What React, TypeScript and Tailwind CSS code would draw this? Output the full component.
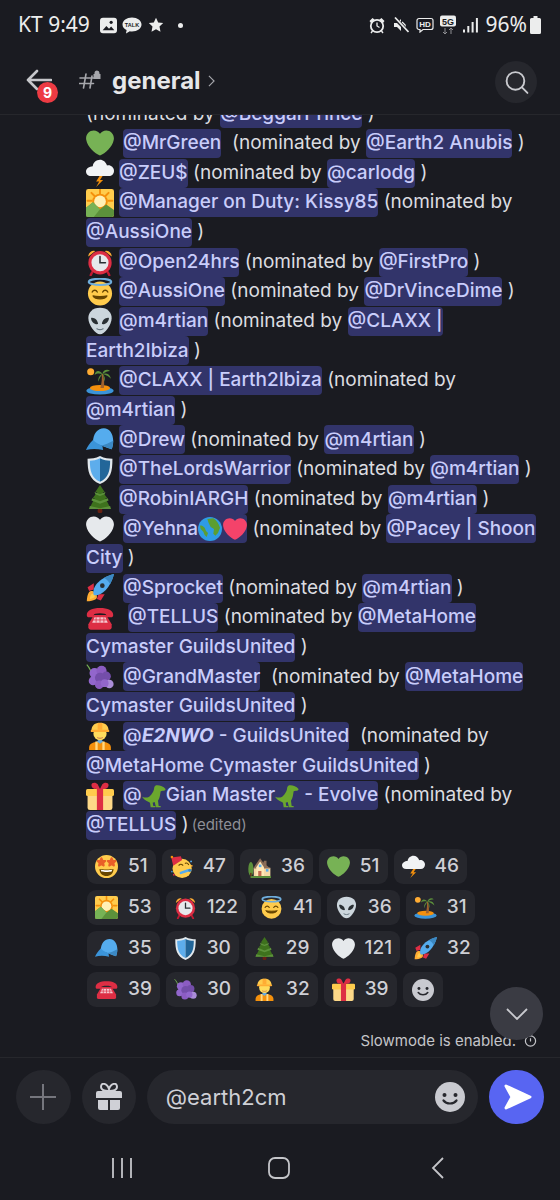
import { ReactNode } from "react";

const HEART =
  "M35.885 11.833c0-5.45-4.418-9.868-9.867-9.868-3.308 0-6.227 1.633-8.018 4.129-1.791-2.496-4.71-4.129-8.017-4.129-5.45 0-9.868 4.417-9.868 9.868 0 .772.098 1.52.266 2.241C1.751 22.587 11.216 31.568 18 34.034c6.783-2.466 16.249-11.447 17.617-19.959.17-.721.268-1.469.268-2.242z";

const star = (cx: number, cy: number) =>
  `M${cx} ${cy - 6}l1.8 3.9 4.2.5-3.1 2.9.8 4.2-3.7-2.1-3.7 2.1.8-4.2-3.1-2.9 4.2-.5z`;

const emojis: Record<string, ReactNode> = {
  green: <path d={HEART} fill="#77B255" />,
  white: <path d={HEART} fill="#E6E9EC" />,
  red: <path d={HEART} fill="#F4436A" />,
  storm: (
    <>
      <path d="M18 21l-5 8h4l-4 7 9-9h-4l4-6z" fill="#F4900C" />
      <path d="M29 8c-.7 0-1.400.100-2 .300C25.700 4 22 1 18 1c-4.800 0-8.700 3.600-9.300 8.200C4.400 9.400 0 12 0 16c0 3 2.500 6 6.500 6h23c3.600 0 6.500-3 6.500-7 0-3.800-3.700-7-7-7z" fill="#F1F3F5" />
    </>
  ),
  sunrise: (
    <>
      <rect x="0" y="0" width="36" height="36" rx="3" fill="#FFCC4D" />
      <path d="M18 1v5M7 5l4 4M29 5l-4 4M2 15h5M29 15h5" stroke="#F4900C" strokeWidth="2.500" strokeLinecap="round" />
      <circle cx="18" cy="16" r="10" fill="#F4900C" />
      <circle cx="18" cy="16" r="7.500" fill="#FFF0B5" />
      <path d="M0 33V24l9-7 9 9 8-6 10 7v6a3 3 0 0 1-3 3H3a3 3 0 0 1-3-3z" fill="#5C913B" />
      <path d="M9 17l9 9-8 10H3a3 3 0 0 1-3-3V24z" fill="#77B255" />
    </>
  ),
  clock: (
    <>
      <path d="M3 11a7 7 0 0 1 9-7zM33 11a7 7 0 0 0-9-7z" fill="#FFAC33" />
      <path d="M8 31l-2 4M28 31l2 4" stroke="#BE1931" strokeWidth="3" strokeLinecap="round" />
      <circle cx="18" cy="19" r="15" fill="#DD2E44" />
      <circle cx="18" cy="19" r="11" fill="#E6E9EC" />
      <path d="M18 11v8h7" fill="none" stroke="#292F33" strokeWidth="2" strokeLinecap="round" />
    </>
  ),
  halo: (
    <>
      <circle cx="18" cy="20" r="15.500" fill="#FFCB4C" />
      <ellipse cx="18" cy="5" rx="14.500" ry="4" fill="none" stroke="#6FAEDD" strokeWidth="2.600" />
      <path d="M8 18c1.500-3 5-3 6.500 0M21.500 18c1.500-3 5-3 6.500 0" fill="none" stroke="#664500" strokeWidth="1.800" strokeLinecap="round" />
      <path d="M9 23c3 5 15 5 18 0-4 1-14 1-18 0z" fill="#664500" stroke="#664500" strokeWidth="1.500" strokeLinejoin="round" />
    </>
  ),
  alien: (
    <>
      <path d="M18 1C8 1 3 7.500 3 14c0 9 9 21 15 21s15-12 15-21C33 7.500 28 1 18 1z" fill="#CCD6DD" />
      <path d="M6.500 14c4-1 9 3 9 8-4 1-9-3-9-8zM29.500 14c-4-1-9 3-9 8 4 1 9-3 9-8z" fill="#292F33" />
      <path d="M14 28c2.500 1.500 5.500 1.500 8 0" fill="none" stroke="#66757F" strokeWidth="1.500" strokeLinecap="round" />
    </>
  ),
  island: (
    <>
      <circle cx="6" cy="6" r="4.500" fill="#FFAC33" />
      <ellipse cx="18" cy="30.500" rx="17.500" ry="5" fill="#3B94D9" />
      <ellipse cx="18" cy="27" rx="13" ry="4" fill="#F4900C" />
      <path d="M20 9c1 6 0 12-1.500 18H23c1-6 0-13-1-18z" fill="#A0622D" />
      <path d="M21 9C17 3 12 5 11 10c3-2 6-2 10-1zM21 9c1-5 6-7 10-4-3 0-6 1-10 4zM21 9c5-2 10 0 11 6-3-3-6-5-11-6zM21 9c-3 1-6 5-5 10 1-4 3-7 5-10zM21 9c3 2 4 6 3 10-1-4-1-7-3-10z" fill="#5C913B" />
    </>
  ),
  cap: (
    <>
      <path d="M9 21C9 10 15 3 23 3c7 0 12 7 12 16 0 5-1 9-2 11-6-2-15-5-24-9z" fill="#55ACEE" />
      <path d="M20 25l13 5c1-3 2-7 2-11-5 3-11 5-15 6z" fill="#3B88C3" />
      <path d="M9 18C5 22 2 26 0 31c7-2 14-2 22 0l-1-6c-4-1-8-3-12-7z" fill="#3B94D9" />
    </>
  ),
  shield: (
    <>
      <path d="M18 0C12 3 7 3.500 2 3.500 2 20 4 30 18 36 32 30 34 20 34 3.500 29 3.500 24 3 18 0z" fill="#E1E8ED" />
      <path d="M18 3C13 5.500 9 6 5 6c0 13 2 22 13 27z" fill="#5DADEC" />
      <path d="M18 3c5 2.500 9 3 13 3 0 13-2 22-13 27z" fill="#226699" />
    </>
  ),
  tree: (
    <>
      <rect x="15" y="30" width="6" height="6" rx="2" fill="#662113" />
      <path d="M18 0l6 9h-2.500l6 8H25l7 14H4l7-14H8.500l6-8H12z" fill="#3E721D" />
      <path d="M11 9l7 3 7-3-1 3-6 2-6-2zM8 17l10 4 10-4 1 3-11 4-11-4zM5 27l13 3 13-3 1 4H4z" fill="#5C913B" />
    </>
  ),
  earth: (
    <>
      <circle cx="18" cy="18" r="18" fill="#2E9BE6" />
      <path d="M14 3l9-1c5 3 8 8 10 14l-3 8-4 4-3-3 1-7-5-3-3-6zM3 13c3-1 5 1 7 3l2 5 3 3-2 6-3-3-2-5-4-4z" fill="#5C9E31" />
    </>
  ),
  rocket: (
    <>
      <path d="M4 23c-2 3-3 8-3 12 4 0 9-1 12-3 2-2 1-6-1-8s-6-3-8-1z" fill="#FFAC33" />
      <path d="M7 26c-1 1-2 4-2 6 2 0 5-1 6-2 1-2 0-3-1-4s-2-1-3 0z" fill="#FFCC4D" />
      <path d="M10 12L2 17l2 5 6-2zM24 26l-5 8-5-2 2-6z" fill="#DD2E44" />
      <path d="M10 27C7 18 16 5 36 0c-5 20-18 29-26 27z" fill="#55ACEE" />
      <path d="M36 0c-5 1-9 3-13 5 3 1 6 4 8 8 2-4 4-8 5-13z" fill="#3B88C3" />
      <circle cx="21" cy="15" r="3" fill="#292F33" />
    </>
  ),
  phone: (
    <>
      <path d="M1 14c0-6 7-9 17-9s17 3 17 9c0 2-1 3-3 3h-4c-2 0-2-1-2-3 0-1-3-2-8-2s-8 1-8 2c0 2 0 3-2 3H4c-2 0-3-1-3-3z" fill="#DD2E44" />
      <path d="M10 14h16l7 12v4a3 3 0 0 1-3 3H6a3 3 0 0 1-3-3v-4z" fill="#DD2E44" />
      <path d="M11 17h14l3 7H8z" fill="#F5C6CE" />
      <path d="M13 17v7M18 17v7M23 17v7M9 20.500h18" stroke="#DD2E44" strokeWidth="1" />
    </>
  ),
  grapes: (
    <>
      <path d="M7 12C5 8 4 5 1 2" fill="none" stroke="#77B255" strokeWidth="1.500" />
      <circle cx="11" cy="13" r="6.500" fill="#9266CC" />
      <circle cx="20" cy="10" r="6.500" fill="#8B5CC2" />
      <circle cx="26" cy="17" r="6" fill="#744EAA" />
      <circle cx="9" cy="23" r="5.500" fill="#9266CC" />
      <circle cx="18" cy="19" r="6.500" fill="#744EAA" />
      <circle cx="17" cy="28" r="5.500" fill="#8B5CC2" />
      <circle cx="30" cy="27" r="5.500" fill="#AA8DD8" />
      <circle cx="24" cy="26" r="5" fill="#9266CC" />
    </>
  ),
  worker: (
    <>
      <path d="M4 36v-3c0-5 5-8 14-8s14 3 14 8v3z" fill="#F4900C" />
      <path d="M12 25h3v11h-3zM21 25h3v11h-3z" fill="#FFD983" />
      <path d="M14 25l4 3 4-3-4-4z" fill="#66AADD" />
      <circle cx="18" cy="15" r="8.500" fill="#FFDC5D" />
      <path d="M7 11C7 4 12 1 18 1s11 3 11 10z" fill="#FFCC4D" />
      <rect x="6" y="10" width="24" height="3" rx="1.500" fill="#FFAC33" />
      <path d="M15 1.300h6V10h-6z" fill="#FFAC33" />
      <path d="M14.500 20c2 1.200 5 1.200 7 0" stroke="#C1694F" strokeWidth="1.200" fill="none" />
    </>
  ),
  gift: (
    <>
      <rect x="2" y="15" width="32" height="21" rx="3" fill="#FDD888" />
      <rect x="0" y="9" width="36" height="9" rx="2" fill="#FFCC4D" />
      <rect x="14" y="9" width="8" height="27" fill="#DD2E44" />
      <path d="M18 9C13 10 7 9 7 4c0-4 6-4 8-1zM18 9c5 1 11 0 11-5 0-4-6-4-8-1z" fill="#DD2E44" />
    </>
  ),
  rex: (
    <path
      d="M21 2c4-1 11 1 14 5 1 2-1 3-4 3l-3 1c-1 5-1 10-4 14l1 8h3v2h-7l-2-8-3 1 1 5h3v2h-7l-1-7C9 26 4 25 0 19c5 2 9 2 12-1 3-3 5-6 6-10 0-3 1-5 3-6z"
      fill="#6BA72E"
    />
  ),
  starstruck: (
    <>
      <circle cx="18" cy="18" r="18" fill="#FFCC4D" />
      <path d="M7 22c0 7 5 11 11 11s11-4 11-11c-4 1-18 1-22 0z" fill="#664500" />
      <path d="M9 23c4 1 14 1 18 0l-1 3c-4 1-12 1-16 0z" fill="#fff" />
      <path d={star(10, 11)} fill="#E95F28" stroke="#E95F28" strokeWidth="3" strokeLinejoin="round" />
      <path d={star(26, 11)} fill="#E95F28" stroke="#E95F28" strokeWidth="3" strokeLinejoin="round" />
    </>
  ),
  party: (
    <>
      <circle cx="19" cy="21" r="15" fill="#FFCC4D" />
      <path d="M2 4l15-2 2 6-14 9z" fill="#DD2E44" />
      <circle cx="3" cy="3" r="2" fill="#F4900C" />
      <path d="M14 16c2-2 4-2 6 0M24 13c2-1 4 0 5 2" fill="none" stroke="#664500" strokeWidth="1.800" strokeLinecap="round" />
      <path d="M17 28l12-4" stroke="#55ACEE" strokeWidth="4" strokeLinecap="round" />
      <circle cx="31" cy="24" r="2.500" fill="#3B88C3" />
      <circle cx="3" cy="26" r="1.500" fill="#3B88C3" />
      <circle cx="6" cy="31" r="1.500" fill="#DD2E44" />
      <circle cx="33" cy="10" r="1.500" fill="#55ACEE" />
      <circle cx="34" cy="17" r="1.500" fill="#FFAC33" />
    </>
  ),
  house: (
    <>
      <ellipse cx="4.500" cy="22" rx="4" ry="11" fill="#5C913B" />
      <rect x="3.500" y="28" width="2" height="6" fill="#662113" />
      <path d="M9 20h26v13H9z" fill="#F5D8A6" />
      <path d="M8 21L19 5l5 7 1-3h4v7l6 5z" fill="#8A6D58" />
      <path d="M13 19l6-9 6 9v14H13z" fill="#FFE8B6" />
      <rect x="17" y="15" width="4" height="4" fill="#55ACEE" />
      <rect x="28" y="22" width="4" height="4" fill="#55ACEE" />
      <rect x="16" y="25" width="5" height="8" fill="#C1694F" />
      <rect x="4" y="33" width="32" height="3" fill="#5C913B" />
    </>
  ),
};

function Emoji({ name, size = 28, className = "" }: { name: string; size?: number; className?: string }) {
  return (
    <svg viewBox="0 0 36 36" width={size} height={size} className={`shrink-0 ${className}`}>
      {emojis[name]}
    </svg>
  );
}

function M({ children, className = "" }: { children: ReactNode; className?: string }) {
  return (
    <span className={`inline-flex h-[29px] items-center whitespace-pre rounded-[4px] bg-[#32346a] font-medium text-[#c9cdfb] ${className}`}>
      {children}
    </span>
  );
}

function Line({ children }: { children: ReactNode }) {
  return <div className="flex h-[29.65px] items-center whitespace-pre">{children}</div>;
}

function Nominee({ emoji, gap = "ml-[5px]", name, by, spacer = " " }: { emoji: string; gap?: string; name: ReactNode; by?: ReactNode; spacer?: string }) {
  return (
    <Line>
      <Emoji name={emoji} />
      <M className={gap}>{name}</M>
      <span>{spacer}(nominated by </span>
      {by}
    </Line>
  );
}

const reactions = [
  [["starstruck", 51], ["party", 47], ["house", 36], ["green", 51], ["storm", 46]],
  [["sunrise", 53], ["clock", 122], ["halo", 41], ["alien", 36], ["island", 31]],
  [["cap", 35], ["shield", 30], ["tree", 29], ["white", 121], ["rocket", 32]],
  [["phone", 39], ["grapes", 30], ["worker", 32], ["gift", 39]],
] as [string, number][][];

function Smiley({ size, bg }: { size: number; bg: string }) {
  return (
    <svg viewBox="0 0 30 30" width={size} height={size}>
      <circle cx="15" cy="15" r="15" fill="#c9cad0" />
      <circle cx="9.500" cy="13" r="2" fill={bg} />
      <circle cx="20.500" cy="13" r="2" fill={bg} />
      <path d="M8.500 18.500c3 4 10 4 13 0" fill="none" stroke={bg} strokeWidth="2.200" strokeLinecap="round" />
    </svg>
  );
}

function StatusBar() {
  return (
    <div className="flex h-[50px] items-center pl-[18px] pr-[19px] text-[21px] text-[#eceded] [font-family:'Noto_Sans',sans-serif]">
      <span>KT 9:49</span>
      <svg viewBox="0 0 16 16" width="17" height="17" className="ml-[10px]">
        <rect x="0.800" y="1.500" width="14.400" height="13" rx="2" fill="none" stroke="#eceded" strokeWidth="1.600" />
        <rect x="0.800" y="1.500" width="14.400" height="13" rx="2" fill="#eceded" />
        <path d="M2.500 12.500l3.500-4 2.500 2.500 2-2 3 3.500z" fill="#1a1b21" />
        <circle cx="10.500" cy="5" r="1.500" fill="#1a1b21" />
      </svg>
      <svg viewBox="0 0 20 17" width="20" height="17" className="ml-[5px]">
        <path d="M10 0.500c5.300 0 9.500 3.200 9.500 7s-4.200 7-9.500 7c-.8 0-1.500-.100-2.200-.200L4 16.500l.6-3.500C2 11.800.5 9.800.500 7.500c0-3.800 4.200-7 9.500-7z" fill="#eceded" />
        <text x="10" y="9.500" textAnchor="middle" fontSize="5.500" fontWeight="700" fill="#1a1b21" fontFamily="Liberation Sans, sans-serif">TALK</text>
      </svg>
      <svg viewBox="0 0 16 16" width="16" height="16" className="ml-[6px]">
        <path d="M8 0.800l2.200 4.700 5 .6-3.700 3.500 1 5.100L8 12.200l-4.500 2.500 1-5.100L.8 6.100l5-.6z" fill="#eceded" />
      </svg>
      <span className="ml-[14px] h-[5px] w-[5px] rounded-full bg-[#eceded]" />
      <div className="ml-auto flex items-center">
        <svg viewBox="0 0 16 17" width="16" height="17">
          <circle cx="8" cy="9" r="6.200" fill="none" stroke="#eceded" strokeWidth="1.800" />
          <path d="M8 5.500V9l2.500 1.500" fill="none" stroke="#eceded" strokeWidth="1.300" />
          <path d="M0.500 4l3-3 2 1.500-3.500 3.500zM15.500 4l-3-3-2 1.500 3.500 3.500z" fill="#eceded" />
          <path d="M3.500 14L2 16M12.500 14l1.500 2" stroke="#eceded" strokeWidth="1.400" />
        </svg>
        <svg viewBox="0 0 16 16" width="16" height="16" className="ml-[8px]">
          <path d="M1 6h3l4-4v12l-4-4H1z" fill="#eceded" />
          <path d="M9 5l3 3v3" fill="none" stroke="#eceded" strokeWidth="1.500" />
          <path d="M2 1.500l13 13" stroke="#1a1b21" strokeWidth="3.500" />
          <path d="M2 0.500l13.500 14.500" stroke="#eceded" strokeWidth="1.700" />
        </svg>
        <svg viewBox="0 0 18 16" width="18" height="16" className="ml-[7px]">
          <path d="M3 1.500h12a2 2 0 0 1 2 2v7a2 2 0 0 1-2 2H7l-3 2.500V12.500H3a2 2 0 0 1-2-2v-7a2 2 0 0 1 2-2z" fill="none" stroke="#eceded" strokeWidth="1.200" />
          <text x="9" y="10" textAnchor="middle" fontSize="8" fontWeight="700" fill="#eceded" fontFamily="Liberation Sans, sans-serif">HD</text>
        </svg>
        <svg viewBox="0 0 18 20" width="18" height="20" className="ml-[5px]">
          <rect x="1" y="0.500" width="16" height="11" rx="2" fill="#eceded" />
          <text x="9" y="9.500" textAnchor="middle" fontSize="9" fontWeight="700" fill="#1a1b21" fontFamily="Liberation Sans, sans-serif">5G</text>
          <path d="M6 13v6m-2-2l2 2 2-2M12 19v-6m-2 2l2-2 2 2" fill="none" stroke="#8f9094" strokeWidth="1" />
        </svg>
        <svg viewBox="0 0 15 16" width="15" height="16" className="ml-[6px]">
          <rect x="0" y="12.500" width="2" height="3" fill="#eceded" />
          <rect x="4.300" y="9" width="2" height="6.500" fill="#eceded" />
          <rect x="8.600" y="5" width="2" height="10.500" fill="#eceded" />
          <rect x="12.900" y="1" width="2" height="14.500" fill="#eceded" />
        </svg>
        <span className="ml-[8px]">96%</span>
        <svg viewBox="0 0 11 18" width="11" height="18" className="ml-[3px]">
          <path d="M3.500 0h4v2h2a1.500 1.500 0 0 1 1.500 1.500V16.500A1.500 1.500 0 0 1 9.500 18h-8A1.500 1.500 0 0 1 0 16.500V3.500A1.500 1.500 0 0 1 1.500 2h2z" fill="#eceded" />
        </svg>
      </div>
    </div>
  );
}

function Header() {
  return (
    <div className="relative flex h-[65px] items-center border-b border-[#26272c] pl-[26px] pr-[23px]">
      <svg viewBox="0 0 26 22" width="26" height="22" className="mb-[5px]">
        <path d="M11 2L2 11l9 9M2 11h23" fill="none" stroke="#c6c7cb" strokeWidth="2.600" strokeLinecap="round" strokeLinejoin="round" />
      </svg>
      <span className="absolute left-[37px] top-[32px] flex h-[21px] w-[21px] items-center justify-center rounded-full bg-[#ed3b43] text-[14px] font-bold text-white">
        9
      </span>
      <svg viewBox="0 0 22 22" width="22" height="22" className="ml-[27px] mt-[-6px]">
        <path d="M7 6L4.500 20M13 8l-2 12M1 10h15M0.500 15.500h14" fill="none" stroke="#a6a7ac" strokeWidth="1.600" strokeLinecap="round" />
        <path d="M15.500 5a2.500 2.500 0 0 1 5 0v1h1v5h-7V6h1z" fill="#a6a7ac" />
      </svg>
      <span className="ml-[11px] -mt-[3px] text-[24px] font-bold text-[#e6e7e9]">general</span>
      <svg viewBox="0 0 8 14" width="7" height="12" className="ml-[7px] -mt-[2px]">
        <path d="M1 1l6 6-6 6" fill="none" stroke="#a6a7ac" strokeWidth="1.300" />
      </svg>
      <span className="ml-auto flex h-[42px] w-[42px] items-center justify-center rounded-full bg-[#26272d]">
        <svg viewBox="0 0 24 24" width="25" height="25">
          <circle cx="11" cy="10.500" r="8.500" fill="none" stroke="#c9cacf" strokeWidth="1.800" />
          <path d="M17.500 17l5 5" stroke="#c9cacf" strokeWidth="1.800" strokeLinecap="round" />
        </svg>
      </span>
    </div>
  );
}

function Messages() {
  return (
    <div className="-mt-[16px] ml-[86px] text-[19px] text-[#dcdde0]">
      <Line>
        <span>(nominated by </span>
        <M>@BeggarPrince</M>
        <span> )</span>
      </Line>
      <Nominee emoji="green" gap="ml-[9px]" name="@MrGreen" spacer="  " by={<><M>@Earth2 Anubis</M><span> )</span></>} />
      <Nominee emoji="storm" name="@ZEU$" by={<><M>@carlodg</M><span> )</span></>} />
      <Line>
        <Emoji name="sunrise" />
        <M className="ml-[5px]">@Manager on Duty: Kissy85</M>
        <span> (nominated by</span>
      </Line>
      <Line><M>@AussiOne</M><span> )</span></Line>
      <Nominee emoji="clock" name="@Open24hrs" by={<><M>@FirstPro</M><span> )</span></>} />
      <Nominee emoji="halo" name="@AussiOne" by={<><M>@DrVinceDime</M><span> )</span></>} />
      <Nominee emoji="alien" name="@m4rtian" by={<M>@CLAXX |</M>} />
      <Line><M>Earth2Ibiza</M><span> )</span></Line>
      <Line>
        <Emoji name="island" />
        <M className="ml-[5px]">@CLAXX | Earth2Ibiza</M>
        <span> (nominated by</span>
      </Line>
      <Line><M>@m4rtian</M><span> )</span></Line>
      <Nominee emoji="cap" name="@Drew" by={<><M>@m4rtian</M><span> )</span></>} />
      <Nominee emoji="shield" name="@TheLordsWarrior" by={<><M>@m4rtian</M><span> )</span></>} />
      <Nominee emoji="tree" name="@RobinIARGH" by={<><M>@m4rtian</M><span> )</span></>} />
      <Nominee
        emoji="white"
        gap="ml-[9px]"
        name={<>@Yehna<Emoji name="earth" size={24} /><Emoji name="red" size={24} className="ml-[1px]" /></>}
        by={<M>@Pacey | Shoon</M>}
      />
      <Line><M>City</M><span> )</span></Line>
      <Nominee emoji="rocket" gap="ml-[9px]" name="@Sprocket" by={<><M>@m4rtian</M><span> )</span></>} />
      <Nominee emoji="phone" gap="ml-[14px]" name="@TELLUS" by={<M>@MetaHome</M>} />
      <Line><M>Cymaster GuildsUnited</M><span> )</span></Line>
      <Line>
        <Emoji name="grapes" />
        <M className="ml-[9px]">@GrandMaster</M>
        <span>  (nominated by </span>
        <M>@MetaHome</M>
      </Line>
      <Line><M>Cymaster GuildsUnited</M><span> )</span></Line>
      <Line>
        <Emoji name="worker" />
        <M className="ml-[9px]">@<em className="font-bold">E2NWO</em> - GuildsUnited</M>
        <span>  (nominated by</span>
      </Line>
      <Line><M>@MetaHome Cymaster GuildsUnited</M><span> )</span></Line>
      <Line>
        <Emoji name="gift" />
        <M className="ml-[9px]">@<Emoji name="rex" size={24} />Gian Master<Emoji name="rex" size={24} /> - Evolve</M>
        <span> (nominated by</span>
      </Line>
      <Line>
        <M>@TELLUS</M>
        <span> )</span>
        <span className="ml-[3px] text-[15px] text-[#8e8f96]">(edited)</span>
      </Line>
    </div>
  );
}

function Reactions() {
  return (
    <div className="ml-[87px] mt-[9px] flex flex-col gap-[6px]">
      {reactions.map((row, i) => (
        <div key={i} className="flex gap-[6px]">
          {row.map(([name, count]) => (
            <div key={name} className="flex h-[35px] items-center gap-[10px] rounded-[9px] bg-[#26272d] pl-[8px] pr-[8px]">
              <Emoji name={name} size={23} />
              <span className="text-[19px] font-medium text-[#cfd0d6]">{count}</span>
            </div>
          ))}
          {i === 3 && (
            <div className="flex h-[35px] w-[40px] items-center justify-center rounded-[9px] bg-[#26272d]">
              <Smiley size={22} bg="#26272d" />
            </div>
          )}
        </div>
      ))}
    </div>
  );
}

function Composer() {
  return (
    <div className="flex h-[88px] gap-[11px] border-t border-[#26272c] pl-[16px] pr-[16px] pt-[12px]">
      <span className="flex h-[54px] w-[55px] items-center justify-center rounded-full bg-[#26272d]">
        <svg viewBox="0 0 28 28" width="28" height="28">
          <path d="M14 1v26M1 14h26" stroke="#75767d" strokeWidth="2" />
        </svg>
      </span>
      <span className="flex h-[54px] w-[54px] items-center justify-center rounded-full bg-[#26272d]">
        <svg viewBox="0 0 28 28" width="28" height="28">
          <path d="M14 8c-3 0-8 0-8-4 0-5 6-4 8 2 2-6 8-7 8-2 0 4-5 4-8 4z" fill="none" stroke="#cfd0d6" strokeWidth="2" />
          <path d="M1 10a2 2 0 0 1 2-2h22a2 2 0 0 1 2 2v5H1zM3 17h10v10H5a2 2 0 0 1-2-2zM15 17h10v8a2 2 0 0 1-2 2h-8z" fill="#cfd0d6" />
        </svg>
      </span>
      <div className="flex h-[54px] w-[332px] items-center rounded-full bg-[#26272d] pl-[19px] pr-[13px]">
        <span className="text-[22px] text-[#cfd0d6]">@earth2cm</span>
        <span className="ml-auto">
          <Smiley size={30} bg="#26272d" />
        </span>
      </div>
      <span className="flex h-[54px] w-[55px] items-center justify-center rounded-full bg-[#5865f2]">
        <svg viewBox="0 0 30 28" width="30" height="28" className="ml-[2px]">
          <path d="M3 3l24 11L3 25l6-11z" fill="#fff" stroke="#fff" strokeWidth="3" strokeLinejoin="round" />
        </svg>
      </span>
    </div>
  );
}

function NavBar() {
  return (
    <div className="flex h-[55px] items-start pt-[12px]">
      <svg viewBox="0 0 22 22" width="22" height="22" className="ml-[111px]">
        <path d="M2 1v20M11 1v20M20 1v20" stroke="#c4c5c9" strokeWidth="1.800" />
      </svg>
      <svg viewBox="0 0 22 22" width="22" height="22" className="ml-[135px]">
        <rect x="1" y="1" width="20" height="20" rx="6" fill="none" stroke="#c4c5c9" strokeWidth="1.800" />
      </svg>
      <svg viewBox="0 0 14 22" width="14" height="22" className="ml-[141px]">
        <path d="M12 1L2 11l10 10" fill="none" stroke="#c4c5c9" strokeWidth="1.800" />
      </svg>
    </div>
  );
}

export default function App() {
  return (
    <div className="flex h-[1200px] w-[560px] flex-col overflow-hidden bg-[#1a1b21] [font-family:Inter,sans-serif]">
      <StatusBar />
      <Header />
      <div className="relative min-h-0 flex-1 overflow-hidden">
        <Messages />
        <Reactions />
        <div className="absolute bottom-[5px] right-[23px] flex items-center gap-[8px] text-[15px] text-[#c4c5c9]">
          <span>Slowmode is enabled.</span>
          <svg viewBox="0 0 14 14" width="13" height="13">
            <circle cx="7" cy="7.500" r="5.500" fill="none" stroke="#c4c5c9" strokeWidth="1.300" />
            <path d="M7 4.500V8M5 0.800h4" stroke="#c4c5c9" strokeWidth="1.300" />
          </svg>
        </div>
        <span className="absolute right-[17px] top-[872px] flex h-[53px] w-[53px] items-center justify-center rounded-full bg-[#3a3b43]">
          <svg viewBox="0 0 22 12" width="22" height="12">
            <path d="M1 1l10 10L21 1" fill="none" stroke="#c9cacf" strokeWidth="1.800" />
          </svg>
        </span>
      </div>
      <Composer />
      <NavBar />
    </div>
  );
}
